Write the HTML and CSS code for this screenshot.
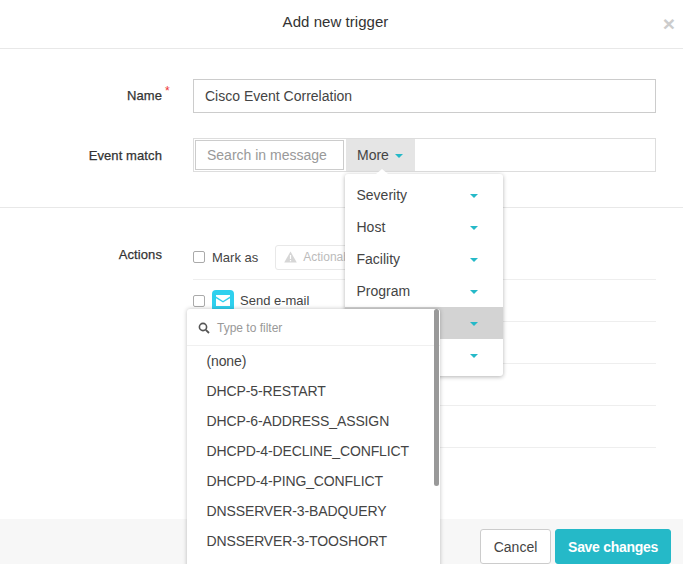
FILE: index.html
```html
<!DOCTYPE html>
<html lang="en">
<head>
    <meta charset="UTF-8">
    <meta name="viewport" content="width=device-width, initial-scale=1.0">
    <title>Add new trigger</title>
    <link rel="stylesheet" href="styles.css">
</head>
<body>
    <div class="modal">
        <div class="modal-header">
            <span class="modal-title">Add new trigger</span>
            <span class="close-btn">×</span>
        </div>

        <div class="section section-top">
            <div class="row row-name">
                <label class="row-label">Name<sup class="required">*</sup></label>
                <div class="text-input">Cisco Event Correlation</div>
            </div>
            <div class="row">
                <label class="row-label">Event match</label>
                <div class="match-box">
                    <div class="search-input">Search in message</div>
                    <div class="more-btn">More <span class="caret"></span></div>
                </div>
            </div>
        </div>

        <div class="section section-actions">
            <div class="row row-actions">
                <label class="row-label label-actions">Actions</label>
                <div class="action-list">
                    <div class="action-row">
                        <span class="checkbox"></span>
                        <span class="action-text">Mark as</span>
                        <div class="tag-select">
                            <svg class="warn-icon" width="13" height="12" viewBox="0 0 13 12"><path d="M6.5 0.5 L12.8 11.5 H0.2 Z" fill="#d6d6d6"/><rect x="5.9" y="4" width="1.2" height="4" fill="#fff"/><rect x="5.9" y="9" width="1.2" height="1.3" fill="#fff"/></svg>
                            <span>Actionable</span>
                        </div>
                    </div>
                    <div class="action-row">
                        <span class="checkbox"></span>
                        <span class="mail-icon">
                            <svg width="14" height="11" viewBox="0 0 14 11"><path d="M0 0 H14 V1.6 L7 6 L0 1.6 Z" fill="#fff"/><path d="M0 3.2 L7 7.6 L14 3.2 V11 H0 Z" fill="#fff"/></svg>
                        </span>
                        <span class="action-text">Send e-mail</span>
                    </div>
                    <div class="action-row"></div>
                    <div class="action-row"></div>
                    <div class="action-row"></div>
                </div>
            </div>
        </div>

        <div class="modal-footer">
            <button class="btn btn-cancel">Cancel</button>
            <button class="btn btn-save">Save changes</button>
        </div>

        <!-- More menu -->
        <div class="more-menu">
            <div class="more-item">Severity <span class="caret"></span></div>
            <div class="more-item">Host <span class="caret"></span></div>
            <div class="more-item">Facility <span class="caret"></span></div>
            <div class="more-item">Program <span class="caret"></span></div>
            <div class="more-item active"><span class="caret"></span></div>
            <div class="more-item"><span class="caret"></span></div>
        </div>

        <!-- Program filter dropdown -->
        <div class="filter-menu">
            <div class="filter-search">
                <svg width="12" height="12" viewBox="0 0 12 12"><circle cx="5" cy="5" r="3.6" fill="none" stroke="#555" stroke-width="1.6"/><path d="M7.8 7.8 L11 11" stroke="#555" stroke-width="1.8"/></svg>
                <span>Type to filter</span>
            </div>
            <div class="filter-item">(none)</div>
            <div class="filter-item">DHCP-5-RESTART</div>
            <div class="filter-item">DHCP-6-ADDRESS_ASSIGN</div>
            <div class="filter-item">DHCPD-4-DECLINE_CONFLICT</div>
            <div class="filter-item">DHCPD-4-PING_CONFLICT</div>
            <div class="filter-item">DNSSERVER-3-BADQUERY</div>
            <div class="filter-item">DNSSERVER-3-TOOSHORT</div>
            <div class="scrollbar"></div>
        </div>
    </div>
</body>
</html>
```

FILE: styles.css
```css
html, body {
    margin: 0;
    padding: 0;
    height: 100%;
    overflow: hidden;
}

body {
    font-family: 'Liberation Sans', Arial, sans-serif;
    font-size: 13px;
    color: #333;
    background: #fff;
}

.modal {
    position: relative;
    display: flex;
    flex-direction: column;
    height: 564px;
    overflow: hidden;
}

/* Header */
.modal-header {
    position: relative;
    height: 35px;
    border-bottom: 1px solid #e8e8e8;
    display: flex;
    justify-content: center;
    align-items: flex-start;
    padding: 13px 12px 0 0;
}

.modal-title {
    font-size: 15px;
    line-height: 18px;
    letter-spacing: 0.05px;
    color: #333;
}

.close-btn {
    position: absolute;
    right: 8px;
    top: 13px;
    font-size: 21px;
    line-height: 21px;
    font-weight: bold;
    color: #ccc;
}

/* Form sections */
.section-top {
    padding: 30px 27px 35px 0;
    border-bottom: 1px solid #e8e8e8;
    display: flex;
    flex-direction: column;
    gap: 25px;
}

.row {
    display: flex;
    align-items: center;
}

.row-label {
    position: relative;
    width: 162px;
    margin-right: 31px;
    text-align: right;
    font-weight: normal;
    flex-shrink: 0;
    letter-spacing: 0.1px;
    -webkit-text-stroke: 0.25px #333;
}

.row-name .row-label {
    margin-top: -2px;
}

.required {
    position: absolute;
    left: 165px;
    top: 3px;
    color: #e33;
    font-size: 12px;
    line-height: 0;
    -webkit-text-stroke: 0;
}

.text-input {
    flex: 1;
    height: 34px;
    box-sizing: border-box;
    border: 1px solid #ccc;
    padding: 0 11px;
    font-size: 14px;
    line-height: 33px;
    color: #444;
}

.match-box {
    flex: 1;
    height: 34px;
    box-sizing: border-box;
    border: 1px solid #ddd;
    padding: 0 0 0 1px;
    display: flex;
    align-items: center;
}

.search-input {
    width: 149px;
    height: 30px;
    box-sizing: border-box;
    border: 1px solid #ccc;
    padding: 0 11px;
    font-size: 14px;
    line-height: 28px;
    color: #999;
    margin-right: 2px;
}

.more-btn {
    width: 69px;
    height: 32px;
    box-sizing: border-box;
    background: #e5e5e5;
    padding-left: 11px;
    font-size: 14px;
    line-height: 32px;
    color: #444;
}

.caret {
    display: inline-block;
    width: 0;
    height: 0;
    margin-left: 2px;
    vertical-align: middle;
    border-left: 4px solid transparent;
    border-right: 4px solid transparent;
    border-top: 4px solid #25b9c8;
}

/* Actions */
.section-actions {
    padding: 27px 27px 0 0;
}

.row-actions {
    align-items: flex-start;
}

.label-actions {
    margin-top: 12px;
}

.action-list {
    flex: 1;
}

.action-row {
    height: 41px;
    border-bottom: 1px solid #eee;
    display: flex;
    align-items: center;
}

.action-row:first-child {
    height: 44px;
}

.checkbox {
    width: 10px;
    height: 10px;
    border: 1px solid #aaa;
    border-radius: 2px;
    margin-right: 7px;
}

.action-text {
    color: #444;
}

.action-row:first-child .action-text {
    margin-right: 17px;
}

.tag-select {
    display: flex;
    align-items: center;
    gap: 6px;
    height: 25px;
    width: 200px;
    box-sizing: border-box;
    border: 1px solid #e8e8e8;
    border-radius: 3px;
    padding-left: 8px;
    color: #bbb;
    font-size: 12px;
}

.mail-icon {
    width: 22px;
    height: 22px;
    border-radius: 4px;
    background: #2fd0ee;
    display: flex;
    align-items: center;
    justify-content: center;
    margin-right: 6px;
}

/* Footer */
.modal-footer {
    margin-top: auto;
    height: 45px;
    background: #f7f7f7;
    display: flex;
    justify-content: flex-end;
    align-items: flex-start;
    gap: 4px;
    padding: 10px 12px 0 0;
    box-sizing: border-box;
}

.btn {
    height: 35px;
    border-radius: 3px;
    font-family: inherit;
    font-size: 14px;
    padding: 0;
}

.btn-cancel {
    width: 71px;
    background: #fff;
    border: 1px solid #ccc;
    color: #444;
}

.btn-save {
    width: 116px;
    background: #25b9c8;
    border: 1px solid #25b9c8;
    color: #fff;
    font-weight: bold;
    letter-spacing: -0.3px;
}

/* More menu */
.more-menu {
    position: absolute;
    left: 345px;
    top: 174px;
    width: 158px;
    padding: 5px 0;
    background: #fff;
    border-radius: 3px;
    box-shadow: 0 1px 4px rgba(0, 0, 0, 0.3);
}

.more-menu::before {
    content: "";
    position: absolute;
    left: 31px;
    top: -5px;
    border-left: 6px solid transparent;
    border-right: 6px solid transparent;
    border-bottom: 5px solid #fff;
}

.more-item {
    height: 32px;
    display: flex;
    align-items: center;
    justify-content: space-between;
    padding: 0 25px 0 11.5px;
    font-size: 14px;
    color: #444;
}

.more-item .caret {
    margin-top: 2px;
}

.more-item.active {
    background: #d3d3d3;
    justify-content: flex-end;
}

.more-item:last-child {
    justify-content: flex-end;
}

/* Filter dropdown */
.filter-menu {
    position: absolute;
    left: 187px;
    top: 309px;
    width: 253px;
    height: 270px;
    background: #fff;
    border-radius: 3px;
    box-shadow: 0 0 4px rgba(0, 0, 0, 0.25);
}

.filter-search {
    display: flex;
    align-items: center;
    gap: 7px;
    height: 37px;
    box-sizing: border-box;
    padding: 2px 0 0 11px;
    border-bottom: 1px solid #f0f0f0;
    color: #999;
    font-size: 12px;
}

.filter-item {
    height: 30px;
    line-height: 30px;
    padding-left: 19.5px;
    font-size: 14px;
    letter-spacing: -0.12px;
    color: #444;
}

.scrollbar {
    position: absolute;
    right: 1px;
    top: 0;
    width: 5px;
    height: 177px;
    background: #999;
    border-radius: 3px;
}
```
